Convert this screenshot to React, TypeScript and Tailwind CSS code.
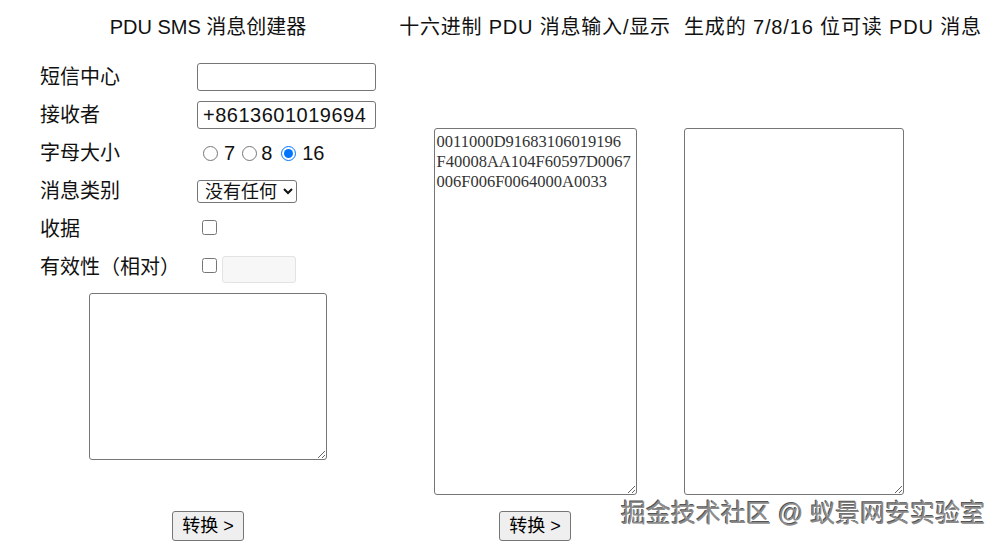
import React from "react";

const sans = "font-['Liberation_Sans','Noto_Sans_CJK_SC',sans-serif]";

const hexPdu =
  "0011000D91683106019196\nF40008AA104F60597D0067\n006F006F0064000A0033";

const FormRow: React.FC<{ label: string; children?: React.ReactNode }> = ({
  label,
  children,
}) => (
  <div className="flex items-center h-[38px]">
    <div className="w-[157px] shrink-0 leading-[28px]">{label}</div>
    <div className="flex items-center">{children}</div>
  </div>
);

const ConvertButton = () => (
  <button className="h-[30px] w-[72px] border border-[#767676] rounded-[3px] bg-[#efefef] text-[18px] leading-[28px] text-black">
    转换 &gt;
  </button>
);

export default function App() {
  return (
    <div
      className={`relative w-[1000px] h-[544px] overflow-hidden bg-white text-[#111] text-[20px] ${sans}`}
    >
      <div className="flex">
        {/* PDU builder */}
        <div className="w-[400px] pl-[16px] flex flex-col items-center">
          <h2 className="pt-[13px] leading-[28px] text-center w-full">
            PDU SMS 消息创建器
          </h2>
          <div className="mt-[17px] w-full pl-[24px]">
            <FormRow label="短信中心">
              <input
                type="text"
                className="w-[179px] h-[28px] border border-[#767676] rounded-[3px] px-[5px] text-[21px] bg-white"
              />
            </FormRow>
            <FormRow label="接收者">
              <input
                type="text"
                defaultValue="+8613601019694"
                className="w-[179px] h-[28px] border border-[#767676] rounded-[3px] px-[5px] text-[20px] tracking-[0.5px] bg-white"
              />
            </FormRow>
            <FormRow label="字母大小">
              <input type="radio" name="bits" className="ml-[6px] w-[15px] h-[15px]" />
              <span className="ml-[6px] leading-[28px]">7</span>
              <input type="radio" name="bits" className="ml-[7px] w-[15px] h-[15px]" />
              <span className="ml-[4px] leading-[28px]">8</span>
              <input
                type="radio"
                name="bits"
                defaultChecked
                className="ml-[9px] w-[15px] h-[15px]"
              />
              <span className="ml-[6px] leading-[28px]">16</span>
            </FormRow>
            <FormRow label="消息类别">
              <select className="w-[100px] h-[23px] border border-[#767676] rounded-[3px] bg-white text-[18px] leading-[21px] pl-[3px]">
                <option>没有任何</option>
                <option>0</option>
                <option>1</option>
              </select>
            </FormRow>
            <FormRow label="收据">
              <input type="checkbox" className="ml-[5px] mb-[3px] w-[15px] h-[15px]" />
            </FormRow>
            <FormRow label="有效性（相对）">
              <input type="checkbox" className="ml-[5px] mb-[3px] w-[15px] h-[15px]" />
              <input
                type="text"
                disabled
                className="ml-[5px] mt-[4px] w-[74px] h-[27px] border border-[#e3e3e3] rounded-[3px] bg-[#f7f7f7]"
              />
            </FormRow>
          </div>
          <textarea className="mt-[7px] w-[238px] h-[167px] border border-[#767676] rounded-[3px] bg-white p-[2px] text-[16px]" />
          <div className="mt-[50px]">
            <ConvertButton />
          </div>
        </div>

        {/* hex PDU */}
        <div className="w-[270px] flex flex-col items-center">
          <h2 className="pt-[13px] leading-[28px] whitespace-nowrap tracking-[0.8px]">
            十六进制 PDU 消息输入/显示
          </h2>
          <textarea
            defaultValue={hexPdu}
            className="mt-[87px] w-[203px] h-[367px] border border-[#767676] rounded-[3px] bg-white pl-[2px] pt-[3px] text-[16.5px] leading-[20px] text-[#333] font-['Liberation_Serif',serif] whitespace-pre overflow-hidden resize-y"
          />
          <div className="mt-[15px]">
            <ConvertButton />
          </div>
        </div>

        {/* readable output */}
        <div className="ml-[14px] w-[316px] flex flex-col">
          <h2 className="pt-[13px] leading-[28px] whitespace-nowrap tracking-[0.85px]">
            生成的 7/8/16 位可读 PDU 消息
          </h2>
          <textarea className="mt-[87px] w-[220px] h-[367px] border border-[#767676] rounded-[3px] bg-white p-[2px] text-[17px]" />
        </div>
      </div>

      {/* watermark */}
      <div className="absolute left-[621px] top-[497px] text-[25px] leading-[32px] text-[#8a8a8a] whitespace-nowrap [text-shadow:1px_1px_0_#fff,-1px_-1px_0_#555]">
        掘金技术社区 @ 蚁景网安实验室
      </div>
    </div>
  );
}
